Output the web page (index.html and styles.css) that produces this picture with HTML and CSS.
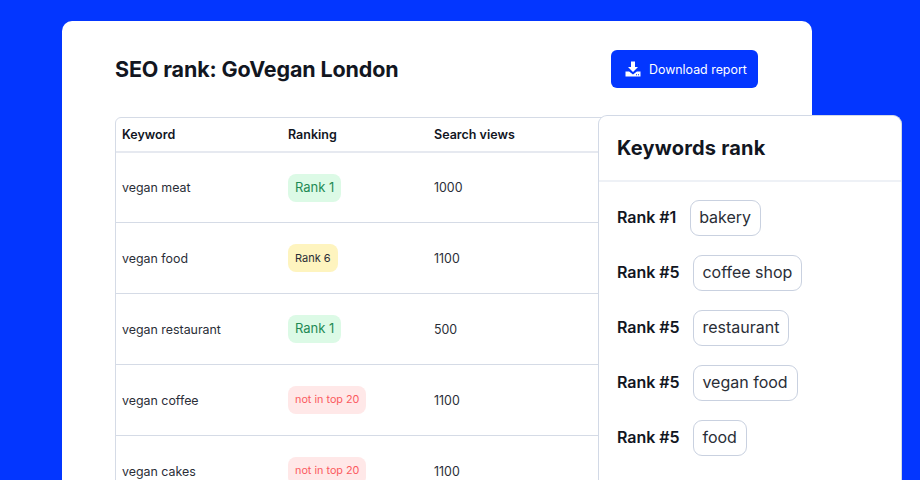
FILE: index.html
```html
<!DOCTYPE html>
<html lang="en">
<head>
  <meta charset="UTF-8">
  <title>SEO rank: GoVegan London</title>
  <link rel="stylesheet" href="styles.css">
</head>
<body>
  <div class="report">
    <div class="report-head">
      <h1>SEO rank: GoVegan London</h1>
      <button class="download">
        <svg width="16" height="16" viewBox="0 0 16 16" fill="#fff"><path d="M6 0.5h4v5.5h3l-5 5-5-5h3z"/><path fill-rule="evenodd" d="M0.5 10.5h3.6l3.9 3 3.9-3h3.6v5h-15zM11 13.2v1h1v-1zM13 13.2v1h1v-1z"/></svg>
        Download report
      </button>
    </div>
    <table class="ranks">
      <thead>
        <tr><th class="col-keyword">Keyword</th><th class="col-ranking">Ranking</th><th>Search views</th></tr>
      </thead>
      <tbody>
        <tr><td>vegan meat</td><td><span class="tag green">Rank 1</span></td><td>1000</td></tr>
        <tr><td>vegan food</td><td><span class="tag yellow">Rank 6</span></td><td>1100</td></tr>
        <tr><td>vegan restaurant</td><td><span class="tag green">Rank 1</span></td><td>500</td></tr>
        <tr><td>vegan coffee</td><td><span class="tag red">not in top 20</span></td><td>1100</td></tr>
        <tr><td>vegan cakes</td><td><span class="tag red">not in top 20</span></td><td>1100</td></tr>
      </tbody>
    </table>
  </div>

  <div class="panel">
    <h2>Keywords rank</h2>
    <div class="panel-body">
      <div class="rank-row"><b>Rank #1</b><span class="chip">bakery</span></div>
      <div class="rank-row"><b>Rank #5</b><span class="chip">coffee shop</span></div>
      <div class="rank-row"><b>Rank #5</b><span class="chip">restaurant</span></div>
      <div class="rank-row"><b>Rank #5</b><span class="chip">vegan food</span></div>
      <div class="rank-row"><b>Rank #5</b><span class="chip">food</span></div>
    </div>
  </div>
</body>
</html>
```

FILE: styles.css
```css
html, body { height: 100%; }
body {
  margin: 0;
  background: #0336ff;
  font-family: Inter, sans-serif;
  color: #12161f;
  overflow: hidden;
  position: relative;
}
.report {
  box-sizing: border-box;
  width: 750px;
  height: 459px;
  margin: 21px 0 0 62px;
  padding: 29px 54px 0 53px;
  background: #fff;
  border-radius: 10px 10px 0 0;
  overflow: hidden;
}
.report-head {
  display: flex;
  justify-content: space-between;
  align-items: center;
  height: 38px;
  margin-bottom: 29px;
}
h1 { margin: 0; font-size: 21.5px; font-weight: 700; letter-spacing: -0.14px; }
.download {
  display: flex;
  align-items: center;
  gap: 8px;
  width: 147px;
  height: 38px;
  padding: 0 0 0 14px;
  border: 0;
  border-radius: 6px;
  background: #0336ff;
  color: #fff;
  font-family: inherit;
  font-size: 12.4px;
}
.ranks {
  width: 643px;
  table-layout: fixed;
  border-collapse: separate;
  border-spacing: 0;
  border: 1px solid #d5dbe6;
  border-radius: 6px;
  font-size: 12.4px;
}
.col-keyword { width: 154px; }
.col-ranking { width: 134px; }
.ranks th {
  height: 32px;
  padding: 0 6px 1px;
  text-align: left;
  font-weight: 600;
  font-size: 12.5px;
  border-bottom: 2px solid #e6e9f0;
}
.ranks td {
  height: 70px;
  padding: 0 6px;
  color: #2a2e37;
  border-bottom: 1px solid #d5dbe6;
}
.ranks tbody tr:first-child td { height: 69px; }
.tag {
  display: inline-block;
  padding: 0 7px 2px;
  line-height: 26px;
  border-radius: 8px;
  font-size: 13px;
  vertical-align: -1px;
}
.ranks tr + tr .tag { vertical-align: -2px; }
.green { background: #dcfae6; color: #1f8a55; }
.ranks tr + tr .yellow, .ranks tr + tr .red { padding: 1px 7px; vertical-align: -3px; }
.yellow { background: #fef4bf; color: #2a2e37; font-size: 11px; }
.red { background: #ffe8e8; color: #fb5a60; font-size: 10.8px; }
.panel {
  position: absolute;
  left: 598px;
  top: 115px;
  box-sizing: border-box;
  width: 304px;
  height: 365px;
  background: #fff;
  border: 1px solid #d2d9e6;
  border-bottom: 0;
  border-radius: 9px 9px 0 0;
}
.panel h2 {
  margin: 0;
  padding: 0 18px;
  height: 64px;
  line-height: 64px;
  font-size: 20px;
  font-weight: 700;
  letter-spacing: 0.2px;
  border-bottom: 2px solid #eef1f6;
}
.panel-body {
  display: flex;
  flex-direction: column;
  gap: 19px;
  padding: 18px;
}
.rank-row { display: flex; align-items: center; gap: 14px; font-size: 16px; }
.rank-row b { font-weight: 600; padding-bottom: 2px; letter-spacing: -0.06px; }
.chip {
  padding: 0 9px 1px 8px;
  line-height: 33px;
  border: 1px solid #c9d1e0;
  border-radius: 9px;
  color: #2a2e37;
}
```
